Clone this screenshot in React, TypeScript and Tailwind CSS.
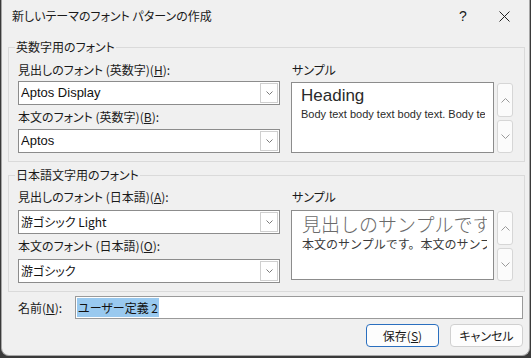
import React from "react";

const jp = "font-['Yu_Gothic_UI','Noto_Sans_CJK_JP',sans-serif] [font-feature-settings:'palt']";

const Chevron = ({ up = false, small = false }: { up?: boolean; small?: boolean }) =>
  small ? (
    <svg width="7" height="4" viewBox="0 0 7 4" className="block">
      <path d="M0.5 0.5 L3.5 3.5 L6.5 0.5" fill="none" stroke="#7a7a7a" strokeWidth="1" />
    </svg>
  ) : (
    <svg width="9" height="5" viewBox="0 0 9 5" className="block">
      <path
        d={up ? "M0.5 4.5 L4.5 0.5 L8.5 4.5" : "M0.5 0.5 L4.5 4.5 L8.5 0.5"}
        fill="none"
        stroke="#9a9a9a"
        strokeWidth="1"
      />
    </svg>
  );

const Combo = ({ value, latin = false }: { value: string; latin?: boolean }) => (
  <div className="flex h-[24px] w-[262px] items-center border border-[#8c8c8c] bg-white pl-[2px] pr-[1px]">
    <span
      className={`flex-1 truncate ${
        latin ? "font-['Liberation_Sans',sans-serif] text-[13px]" : `${jp} text-[12px]`
      } text-[#111]`}
    >
      {value}
    </span>
    <div className="flex h-[20px] w-[18px] items-center justify-center border border-[#cfcfcf] bg-white">
      <Chevron small />
    </div>
  </div>
);

const Label = ({ text, k }: { text: string; k: string }) => (
  <div className={`${jp} h-[16px] text-[12px] leading-[16px] text-[#1a1a1a]`}>
    {text}(<span className="underline">{k}</span>):
  </div>
);

const Spin = () => (
  <div className="flex flex-col gap-[3px] pt-[1px]">
    <div className="flex h-[34px] w-[16px] items-center justify-center rounded-[3px] border border-[#d6d6d6] bg-[#fbfbfb]">
      <Chevron up />
    </div>
    <div className="flex h-[33px] w-[16px] items-center justify-center rounded-[3px] border border-[#d6d6d6] bg-[#fbfbfb]">
      <Chevron />
    </div>
  </div>
);

const Group = ({
  legend,
  children,
  className = "",
}: {
  legend: string;
  children: React.ReactNode;
  className?: string;
}) => (
  <fieldset className={`border border-[#dadada] pl-[6px] pr-[11px] ${className}`}>
    <legend className={`${jp} px-[1px] text-[12px] leading-[16px] text-[#1a1a1a]`}>{legend}</legend>
    <div className="pl-[3px]">{children}</div>
  </fieldset>
);

export default function App() {
  return (
    <div className="h-[358px] w-[531px] bg-[#3a3a3a]">
      <div className="ml-[1px] flex h-[356px] w-[529px] flex-col rounded-b-[8px] border border-t-0 border-[#a6a6a6] bg-[#f0f0f0]">
        {/* title bar */}
        <div className={`${jp} flex h-[32px] items-center pl-[10px] text-[12px] text-[#1a1a1a]`}>
          <span className="flex-1">新しいテーマのフォント パターンの作成</span>
          <span className="w-[40px] font-['Liberation_Sans',sans-serif] text-[14px]">?</span>
          <div className="flex w-[30px] items-center">
            <svg width="11" height="11" viewBox="0 0 11 11">
              <path d="M0.5 0.5 L10.5 10.5 M10.5 0.5 L0.5 10.5" stroke="#222" strokeWidth="1" />
            </svg>
          </div>
        </div>

        <div className="flex flex-col px-[6px] pt-[7px]">
          <Group legend="英数字用のフォント" className="pt-[7px] pb-[8px]">
            <div className="flex gap-[11px]">
              <div className="flex flex-col">
                <Label text="見出しのフォント (英数字)" k="H" />
                <div className="mt-[3px]">
                  <Combo value="Aptos Display" latin />
                </div>
                <div className="mt-[4px]">
                  <Label text="本文のフォント (英数字)" k="B" />
                </div>
                <div className="mt-[4px]">
                  <Combo value="Aptos" latin />
                </div>
              </div>
              <div className="flex flex-col">
                <div className={`${jp} h-[16px] pl-[1px] text-[12px] leading-[16px] text-[#1a1a1a]`}>サンプル</div>
                <div className="mt-[4px] flex gap-[3px]">
                  <div className="h-[71px] w-[203px] border border-[#8c8c8c] bg-white pl-[9px] pr-[8px] pt-[2px] font-['Liberation_Sans',sans-serif] text-[#2a2a2a]">
                    <div className="overflow-hidden whitespace-nowrap text-[17px] leading-[22px]">Heading</div>
                    <div className="overflow-hidden whitespace-nowrap text-[11px] leading-[15px]">
                      Body text body text body text. Body text
                    </div>
                  </div>
                  <Spin />
                </div>
              </div>
            </div>
          </Group>

          <Group legend="日本語文字用のフォント" className="mt-[5px] pt-[6px] pb-[8px]">
            <div className="flex gap-[11px]">
              <div className="flex flex-col">
                <Label text="見出しのフォント (日本語)" k="A" />
                <div className="mt-[5px]">
                  <Combo value="游ゴシック Light" />
                </div>
                <div className="mt-[4px]">
                  <Label text="本文のフォント (日本語)" k="O" />
                </div>
                <div className="mt-[5px]">
                  <Combo value="游ゴシック" />
                </div>
              </div>
              <div className="flex flex-col">
                <div className={`${jp} h-[16px] pl-[1px] text-[12px] leading-[16px] text-[#1a1a1a]`}>サンプル</div>
                <div className="mt-[5px] flex gap-[3px]">
                  <div className="h-[70px] w-[203px] border border-[#8c8c8c] bg-white pl-[10px] pr-[6px] pt-[1px] font-['Noto_Sans_CJK_JP',sans-serif]">
                    <div className="overflow-hidden whitespace-nowrap text-[19px] font-light leading-[24px] text-[#6a6a6a]">
                      見出しのサンプルです
                    </div>
                    <div className="overflow-hidden whitespace-nowrap text-[12px] leading-[16px] text-[#3a3a3a]">
                      本文のサンプルです。本文のサンプル
                    </div>
                  </div>
                  <Spin />
                </div>
              </div>
            </div>
          </Group>

          {/* name row */}
          <div className={`${jp} mt-[4px] flex items-center text-[12px] text-[#1a1a1a]`}>
            <span className="w-[67px] pl-[10px]">
              名前(<span className="underline">N</span>):
            </span>
            <div className="flex h-[23px] flex-1 items-center border border-[#9a9a9a] bg-white pl-[1px]">
              <span className="bg-[#99c9ef] px-[1px] leading-[19px] text-[#111]">ユーザー定義 2</span>
            </div>
          </div>

          {/* buttons */}
          <div className={`${jp} mt-[5px] flex justify-end gap-[11px] text-[12px] text-[#1a1a1a]`}>
            <button className="flex h-[23px] w-[73px] items-center justify-center rounded-[4px] border border-[#2a6fbf] bg-[#fdfdfd]">
              保存(<span className="underline">S</span>)
            </button>
            <button className="flex h-[23px] w-[73px] items-center justify-center rounded-[4px] border border-[#d0d0d0] bg-[#fdfdfd]">
              キャンセル
            </button>
          </div>
        </div>
      </div>
    </div>
  );
}
